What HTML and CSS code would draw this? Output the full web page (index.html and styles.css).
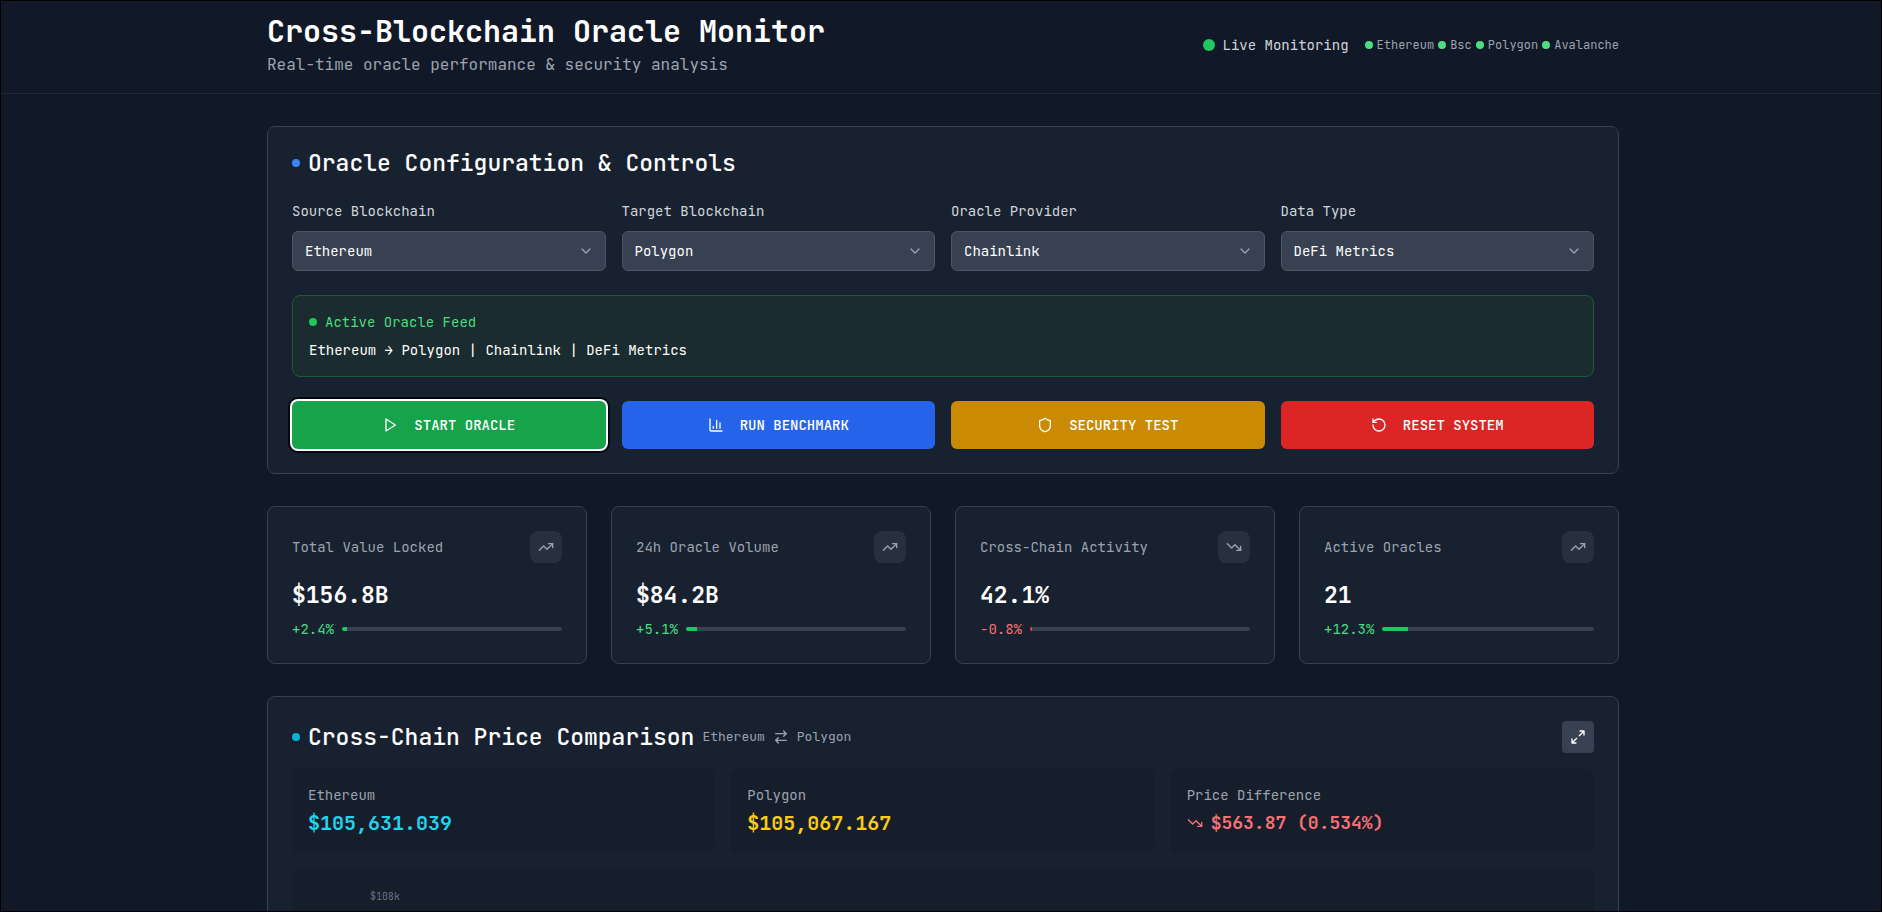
FILE: index.html
```html
<!DOCTYPE html>
<html lang="en">

<head>
	<meta charset="utf-8">
	<meta name="viewport" content="width=device-width, initial-scale=1">
	<title>Cross-Blockchain Oracle Monitor</title>
	<link rel="stylesheet" href="styles.css">
</head>

<body>
	<!-- icons used more than once -->
	<svg class="sprite" aria-hidden="true">
		<symbol id="trend-up" viewBox="0 0 24 24">
			<path d="M22 7 13.5 15.5 8.5 10.5 2 17" />
			<path d="M16 7h6v6" />
		</symbol>
		<symbol id="trend-down" viewBox="0 0 24 24">
			<path d="M22 17 13.5 8.5 8.5 13.5 2 7" />
			<path d="M16 17h6v-6" />
		</symbol>
		<symbol id="chevron" viewBox="0 0 24 24">
			<path d="m6 9 6 6 6-6" />
		</symbol>
	</svg>

	<header class="header">
		<div class="container header-inner">
			<div>
				<h1>Cross-Blockchain Oracle Monitor</h1>
				<p class="subtitle">Real-time oracle performance &amp; security analysis</p>
			</div>
			<div class="status">
				<div class="live"><span class="dot dot-large green"></span>Live Monitoring</div>
				<ul class="chains">
					<li><span class="dot light-green"></span>Ethereum</li>
					<li><span class="dot light-green"></span>Bsc</li>
					<li><span class="dot light-green"></span>Polygon</li>
					<li><span class="dot light-green"></span>Avalanche</li>
				</ul>
			</div>
		</div>
	</header>

	<main class="container main">
		<section class="card">
			<h2><span class="dot blue"></span>Oracle Configuration &amp; Controls</h2>

			<div class="grid fields">
				<div class="field">
					<label for="source">Source Blockchain</label>
					<div class="select-box">
						<select id="source">
							<option>Ethereum</option>
							<option>Bsc</option>
							<option>Polygon</option>
							<option>Avalanche</option>
						</select>
						<svg class="icon chevron"><use href="#chevron" /></svg>
					</div>
				</div>
				<div class="field">
					<label for="target">Target Blockchain</label>
					<div class="select-box">
						<select id="target">
							<option>Polygon</option>
							<option>Ethereum</option>
							<option>Bsc</option>
							<option>Avalanche</option>
						</select>
						<svg class="icon chevron"><use href="#chevron" /></svg>
					</div>
				</div>
				<div class="field">
					<label for="provider">Oracle Provider</label>
					<div class="select-box">
						<select id="provider">
							<option>Chainlink</option>
						</select>
						<svg class="icon chevron"><use href="#chevron" /></svg>
					</div>
				</div>
				<div class="field">
					<label for="data-type">Data Type</label>
					<div class="select-box">
						<select id="data-type">
							<option>DeFi Metrics</option>
						</select>
						<svg class="icon chevron"><use href="#chevron" /></svg>
					</div>
				</div>
			</div>

			<div class="feed">
				<div class="feed-title"><span class="dot green"></span>Active Oracle Feed</div>
				<p>Ethereum → Polygon | Chainlink | DeFi Metrics</p>
			</div>

			<div class="grid">
				<button type="button" class="btn btn-green selected">
					<svg class="icon" viewBox="0 0 24 24"><path d="m6 3 14 9-14 9z" /></svg>
					START ORACLE
				</button>
				<button type="button" class="btn btn-blue">
					<svg class="icon" viewBox="0 0 24 24"><path d="M3 3v16a2 2 0 0 0 2 2h16M8 17v-3M13 17V5M18 17V9" /></svg>
					RUN BENCHMARK
				</button>
				<button type="button" class="btn btn-yellow">
					<svg class="icon" viewBox="0 0 24 24"><path d="M20 13c0 5-3.5 7.5-7.66 8.95a1 1 0 0 1-.67-.01C7.5 20.5 4 18 4 13V6a1 1 0 0 1 1-1c2 0 4.5-1.2 6.24-2.72a1.17 1.17 0 0 1 1.52 0C14.51 3.81 17 5 19 5a1 1 0 0 1 1 1z" /></svg>
					SECURITY TEST
				</button>
				<button type="button" class="btn btn-red">
					<svg class="icon" viewBox="0 0 24 24"><path d="M3 12a9 9 0 1 0 9-9 9.75 9.75 0 0 0-6.74 2.74L3 8" /><path d="M3 3v5h5" /></svg>
					RESET SYSTEM
				</button>
			</div>
		</section>

		<section class="grid stats">
			<div class="card stat">
				<div class="stat-head">
					<span>Total Value Locked</span>
					<span class="badge"><svg class="icon"><use href="#trend-up" /></svg></span>
				</div>
				<div class="stat-value">$156.8B</div>
				<div class="change up">+2.4%<div class="bar"><div class="fill" style="width: 2.4%"></div></div></div>
			</div>
			<div class="card stat">
				<div class="stat-head">
					<span>24h Oracle Volume</span>
					<span class="badge"><svg class="icon"><use href="#trend-up" /></svg></span>
				</div>
				<div class="stat-value">$84.2B</div>
				<div class="change up">+5.1%<div class="bar"><div class="fill" style="width: 5.1%"></div></div></div>
			</div>
			<div class="card stat">
				<div class="stat-head">
					<span>Cross-Chain Activity</span>
					<span class="badge"><svg class="icon"><use href="#trend-down" /></svg></span>
				</div>
				<div class="stat-value">42.1%</div>
				<div class="change down">-0.8%<div class="bar"><div class="fill" style="width: 0.8%"></div></div></div>
			</div>
			<div class="card stat">
				<div class="stat-head">
					<span>Active Oracles</span>
					<span class="badge"><svg class="icon"><use href="#trend-up" /></svg></span>
				</div>
				<div class="stat-value">21</div>
				<div class="change up">+12.3%<div class="bar"><div class="fill" style="width: 12.3%"></div></div></div>
			</div>
		</section>

		<section class="card">
			<div class="compare-head">
				<h2><span class="dot cyan"></span>Cross-Chain Price Comparison</h2>
				<div class="pair">
					Ethereum
					<svg class="icon" viewBox="0 0 24 24"><path d="m16 3 4 4-4 4M20 7H4M8 21l-4-4 4-4M4 17h16" /></svg>
					Polygon
				</div>
				<button type="button" class="expand" aria-label="Expand">
					<svg class="icon" viewBox="0 0 24 24"><path d="M15 3h6v6M21 3l-7 7M3 21l7-7M9 21H3v-6" /></svg>
				</button>
			</div>

			<div class="prices">
				<div class="panel">
					<div class="panel-label">Ethereum</div>
					<div class="price cyan-text">$105,631.039</div>
				</div>
				<div class="panel">
					<div class="panel-label">Polygon</div>
					<div class="price yellow-text">$105,067.167</div>
				</div>
				<div class="panel">
					<div class="panel-label">Price Difference</div>
					<div class="price difference red-text"><svg class="icon"><use href="#trend-down" /></svg>$563.87 (0.534%)</div>
				</div>
			</div>

			<div class="panel chart">
				<span class="tick">$108k</span>
			</div>
		</section>
	</main>
</body>

</html>
```

FILE: styles.css
```css
* {
	box-sizing: border-box;
}

body {
	margin: 0;
	height: 100vh;
	overflow: hidden;
	border: 1px solid #000;
	background: #111827;
	color: #fff;
	font-family: "JetBrains Mono", "DejaVu Sans Mono", monospace;
	font-size: 14px;
	line-height: 20px;
}

h1, h2, p, ul {
	margin: 0;
	padding: 0;
}

.sprite {
	display: none;
}

.icon {
	width: 16px;
	height: 16px;
	flex: none;
	fill: none;
	stroke: currentColor;
	stroke-width: 2;
	stroke-linecap: round;
	stroke-linejoin: round;
}

.container {
	max-width: 1400px;
	margin: 0 auto;
	padding: 0 22px 0 26px;
}

.header {
	padding: 12px 0 16px;
	border-bottom: 1px solid #1f2937;
}

.header-inner {
	display: flex;
	justify-content: space-between;
	align-items: center;
}

h1 {
	font-size: 30px;
	line-height: 36px;
	font-weight: 700;
}

.subtitle {
	margin-top: 4px;
	color: #9ca3af;
	font-size: 16px;
	line-height: 24px;
}

.status, .live, .chains, .chains li {
	display: flex;
	align-items: center;
}

.status {
	gap: 16px;
}

.live {
	gap: 8px;
	color: #d1d5db;
}

.chains {
	gap: 4px;
	color: #9ca3af;
	font-size: 12px;
	line-height: 16px;
}

.chains li {
	gap: 4px;
}

.dot {
	width: 8px;
	height: 8px;
	flex: none;
	border-radius: 50%;
}

.dot-large {
	width: 12px;
	height: 12px;
}

.green {
	background: #22c55e;
}

.light-green {
	background: #4ade80;
}

.blue {
	background: #3b82f6;
}

.cyan {
	background: #06b6d4;
}

.main {
	padding-top: 32px;
	display: flex;
	flex-direction: column;
	gap: 32px;
}

.card {
	padding: 24px;
	background: #18212f;
	border: 1px solid #374151;
	border-radius: 8px;
}

.main > .card:first-child {
	padding-top: 20px;
}

h2 {
	display: flex;
	align-items: center;
	gap: 8px;
	font-size: 23px;
	line-height: 32px;
	font-weight: 500;
}

.grid {
	display: grid;
	grid-template-columns: repeat(4, 1fr);
	gap: 16px;
}

.fields {
	margin-top: 22px;
}

.field label {
	display: block;
	margin-bottom: 10px;
	color: #d1d5db;
}

.select-box {
	position: relative;
}

.select-box select {
	display: block;
	width: 100%;
	height: 40px;
	padding: 0 12px;
	appearance: none;
	background: #374151;
	border: 1px solid #4b5563;
	border-radius: 6px;
	color: #fff;
	font: inherit;
}

.chevron {
	position: absolute;
	right: 12px;
	top: 12px;
	color: #9ca3af;
	pointer-events: none;
}

.feed {
	margin: 24px 0;
	padding: 16px;
	background: #1a2c2f;
	border: 1px solid #1c5a38;
	border-radius: 8px;
}

.feed-title {
	display: flex;
	align-items: center;
	gap: 8px;
	margin-bottom: 8px;
	color: #4ade80;
}

.btn {
	display: flex;
	align-items: center;
	justify-content: center;
	gap: 16px;
	height: 48px;
	border: 0;
	border-radius: 6px;
	color: #fff;
	font: inherit;
	font-weight: 500;
}

.btn-green {
	background: #16a34a;
}

.btn-blue {
	background: #2563eb;
}

.btn-yellow {
	background: #ca8a04;
}

.btn-red {
	background: #dc2626;
}

.selected {
	box-shadow: 0 0 0 2px #fff, 0 0 0 4px #030712;
}

.stats {
	gap: 24px;
}

.stat-head {
	display: flex;
	justify-content: space-between;
	align-items: center;
	color: #9ca3af;
}

.badge {
	display: flex;
	padding: 8px;
	background: #283040;
	border-radius: 8px;
}

.stat-value {
	margin: 16px 0 8px;
	font-size: 23px;
	line-height: 32px;
	font-weight: 700;
}

.change {
	display: flex;
	align-items: center;
	gap: 8px;
}

.up {
	color: #4ade80;
}

.down {
	color: #f87171;
}

.bar {
	flex: 1;
	height: 4px;
	overflow: hidden;
	background: #374151;
	border-radius: 2px;
}

.fill {
	height: 100%;
	background: #22c55e;
}

.down .fill {
	background: #ef4444;
}

.compare-head {
	display: flex;
	align-items: center;
	gap: 8px;
}

.pair {
	display: flex;
	align-items: center;
	gap: 8px;
	color: #9ca3af;
	font-size: 13px;
}

.expand {
	display: flex;
	margin-left: auto;
	padding: 8px;
	background: #374151;
	border: 0;
	border-radius: 4px;
	color: #fff;
}

.prices {
	display: grid;
	grid-template-columns: repeat(3, 1fr);
	gap: 16px;
	margin: 16px 0;
}

.panel {
	padding: 16px;
	background: #161d2b;
	border-radius: 8px;
}

.panel-label {
	color: #9ca3af;
}

.price {
	margin-top: 4px;
	font-size: 20px;
	line-height: 28px;
	font-weight: 700;
}

.difference {
	display: flex;
	align-items: center;
	gap: 8px;
	font-size: 18px;
}

.cyan-text {
	color: #22d3ee;
}

.yellow-text {
	color: #facc15;
}

.red-text {
	color: #f87171;
}

.chart {
	height: 320px;
	padding-left: 78px;
}

.tick {
	color: #64748b;
	font-size: 10px;
}
```
